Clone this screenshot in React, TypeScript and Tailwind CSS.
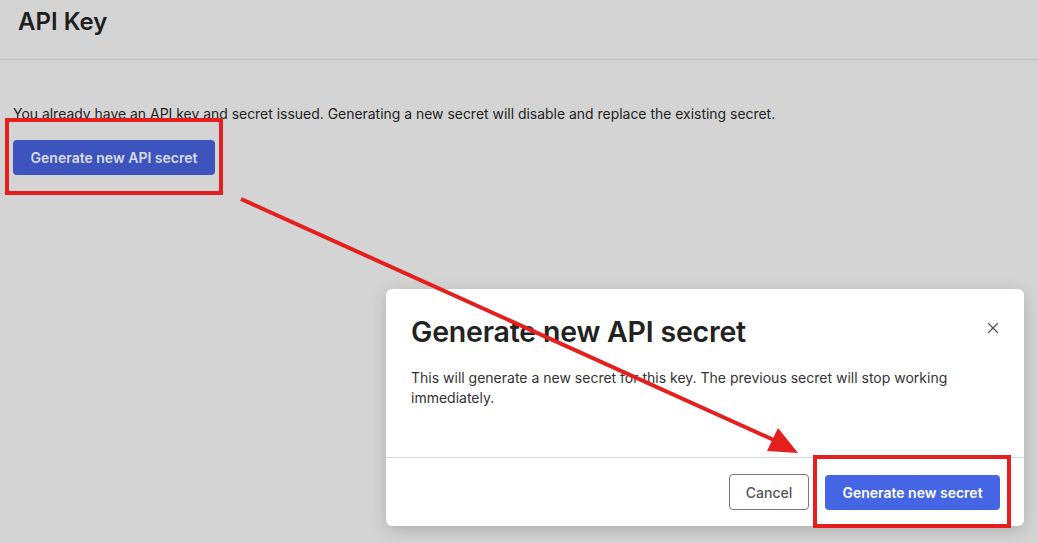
import { X } from "lucide-react";

const Annotations = () => (
  <>
    {/* red highlight boxes */}
    <div className="absolute left-[5px] top-[118px] w-[218px] h-[77px] border-4 border-[#e51e1e] pointer-events-none" />
    <div className="absolute left-[813px] top-[455px] w-[198px] h-[73px] border-4 border-[#e51e1e] pointer-events-none" />
    {/* arrow */}
    <svg className="absolute inset-0 pointer-events-none" width="1038" height="543" viewBox="0 0 1038 543">
      <line x1="241" y1="199" x2="776" y2="441" stroke="#e51e1e" strokeWidth="4" />
      <polygon points="798,453 767,451 778,428" fill="#e51e1e" />
    </svg>
  </>
);

const ConfirmDialog = () => (
  <div className="absolute left-[386px] top-[289px] w-[638px] h-[237px] bg-white rounded-md shadow-[0_4px_16px_rgba(0,0,0,0.18)] flex flex-col">
    <div className="flex items-start justify-between pl-[25px] pr-[22px] pt-[24px]">
      <h2 className="text-[28.5px] leading-[38px] font-semibold text-[#222] tracking-[-0.2px]">
        Generate new API secret
      </h2>
      <button className="mt-[6px] text-[#555]">
        <X size={18} strokeWidth={1.6} />
      </button>
    </div>
    <p className="pl-[25px] pr-[60px] mt-[17px] text-[14px] leading-[20px] text-[#333]">
      This will generate a new secret for this key. The previous secret will stop working
      immediately.
    </p>
    <div className="mt-auto border-t border-[#d6d6d6] flex justify-end items-center gap-[16px] pr-[24px] h-[69px]">
      <button className="h-[36px] w-[80px] rounded border border-[#777] text-[14px] text-[#555] font-medium">
        Cancel
      </button>
      <button className="h-[35px] w-[175px] rounded bg-[#4465e4] text-[14px] text-white font-semibold">
        Generate new secret
      </button>
    </div>
  </div>
);

const App = () => {
  return (
    <div className="relative w-[1038px] h-[543px] overflow-hidden bg-[#d4d4d4] font-['Inter',sans-serif]">
      <div className="h-[60px] border-b border-[#bcbcbc] pl-[18px] pt-[7px]">
        <h1 className="text-[24px] leading-[30px] font-semibold text-[#1e1e1e]">API Key</h1>
      </div>
      <div className="pl-[13px] pt-[44px]">
        <p className="text-[13.95px] leading-[20px] text-[#1f1f1f]">
          You already have an API key and secret issued. Generating a new secret will disable and replace the existing secret.
        </p>
        <button className="mt-[16px] h-[35px] w-[202px] rounded bg-[#3d53bd] text-[14px] font-semibold text-[#d8dcef]">
          Generate new API secret
        </button>
      </div>
      <ConfirmDialog />
      <Annotations />
    </div>
  );
};

export default App;
